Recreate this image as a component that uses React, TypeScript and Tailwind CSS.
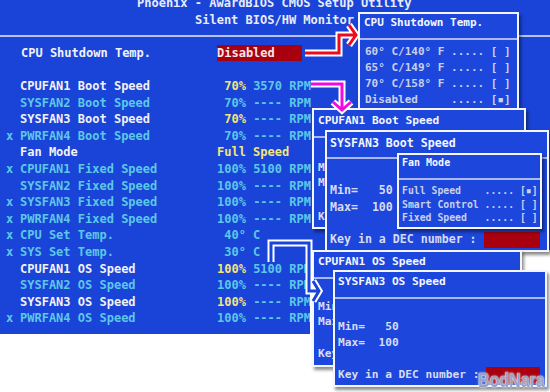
import type { ReactNode } from 'react'

type Row = { x?: boolean; name: string; hi?: boolean; pct: string; rest?: string }

const rows: Row[] = [
  { name: 'CPUFAN1 Boot Speed', hi: true, pct: ' 70%', rest: ' 3570 RPM' },
  { name: 'SYSFAN2 Boot Speed', pct: ' 70%', rest: ' ---- RPM' },
  { name: 'SYSFAN3 Boot Speed', hi: true, pct: ' 70%', rest: ' ---- RPM' },
  { x: true, name: 'PWRFAN4 Boot Speed', pct: ' 70%', rest: ' ---- RPM' },
  { name: 'Fan Mode', hi: true, pct: 'Full Speed' },
  { x: true, name: 'CPUFAN1 Fixed Speed', pct: '100%', rest: ' 5100 RPM' },
  { name: 'SYSFAN2 Fixed Speed', pct: '100%', rest: ' ---- RPM' },
  { x: true, name: 'SYSFAN3 Fixed Speed', pct: '100%', rest: ' ---- RPM' },
  { x: true, name: 'PWRFAN4 Fixed Speed', pct: '100%', rest: ' ---- RPM' },
  { x: true, name: 'CPU Set Temp.', pct: ' 40° C' },
  { x: true, name: 'SYS Set Temp.', pct: ' 30° C' },
  { name: 'CPUFAN1 OS Speed', hi: true, pct: '100%', rest: ' 5100 RPM' },
  { name: 'SYSFAN2 OS Speed', pct: '100%', rest: ' ---- RPM' },
  { name: 'SYSFAN3 OS Speed', hi: true, pct: '100%', rest: ' ---- RPM' },
  { x: true, name: 'PWRFAN4 OS Speed', pct: '100%', rest: ' ---- RPM' },
]

function Win({ className, children }: { className: string; children: ReactNode }) {
  return (
    <div
      className={
        'absolute flex flex-col overflow-hidden border-2 border-[#f4f6ff] bg-[#1d47dc] font-bold text-[#d6dcf4] shadow-[2px_3px_3px_rgba(0,0,0,0.45)] ' +
        className
      }
    >
      {children}
    </div>
  )
}

function Sep({ className }: { className: string }) {
  return <div className={'h-[2px] w-full shrink-0 bg-[#a9b8ee] ' + className} />
}

export default function App() {
  return (
    <div className="relative h-[392px] w-[550px] overflow-hidden bg-white font-['DejaVu_Sans_Mono',monospace]">
      {/* main setup screen */}
      <div className="flex h-[334px] w-[550px] flex-col bg-[#1a44d8] text-[12px] font-bold whitespace-pre [clip-path:polygon(0_0,100%_0,100%_250px,310px_250px,310px_100%,0_100%)]">
        <div className="-mt-[3px] h-[12px] pl-[137px] leading-[12px] text-[#e8ecf8]">
          Phoenix - AwardBIOS CMOS Setup Utility
        </div>
        <div className="mt-[5px] h-[12px] pl-[195px] leading-[12px] text-[#e8ecf8]">Silent BIOS/HW Monitor</div>
        <div className="mt-[9px] h-[2px] w-full bg-[#b8c4f0]" />
        <div className="mt-[8px] flex h-[16px] items-center leading-[16px]">
          <span className="w-[217px] pl-[21px] text-[#f0f2f8]">CPU Shutdown Temp.</span>
          <span className="h-[16px] w-[85px] bg-[#a8000e] text-[#f4e8e8]">Disabled</span>
        </div>
        <div className="mt-[17px] flex flex-col">
          {rows.map((r) => (
            <div key={r.name} className="flex h-[16.6px] leading-[16.6px] text-[#5cc8e8]">
              <span className="w-[20px] pl-[6px]">{r.x ? 'x' : ''}</span>
              <span className={'w-[197px] ' + (r.hi ? 'text-[#f2f2f4]' : '')}>{r.name}</span>
              <span className={r.hi ? 'text-[#f2e67c]' : ''}>{r.pct}</span>
              <span>{r.rest}</span>
            </div>
          ))}
        </div>
      </div>

      {/* CPU Shutdown Temp. */}
      <Win className="left-[358px] top-[12px] h-[110px] w-[161px] text-[11px]">
        <div className="mt-[2px] h-[14px] pl-[4px] leading-[14px] text-[#f4f6ff]">CPU Shutdown Temp.</div>
        <Sep className="mt-[8px]" />
        <div className="mt-[4px] flex flex-col whitespace-pre pl-[5px] text-[#c8d0ec]">
          <div className="h-[16px] leading-[16px]">60° C/140° F ..... [ ]</div>
          <div className="h-[16px] leading-[16px]">65° C/149° F ..... [ ]</div>
          <div className="h-[16px] leading-[16px]">70° C/158° F ..... [ ]</div>
          <div className="h-[16px] leading-[16px]">Disabled     ..... [▪]</div>
        </div>
      </Win>

      {/* CPUFAN1 Boot Speed */}
      <Win className="left-[312px] top-[108px] h-[121px] w-[214px] text-[11.2px]">
        <div className="mt-[4px] h-[14px] pl-[4px] leading-[14px] text-[#f4f6ff]">CPUFAN1 Boot Speed</div>
        <Sep className="mt-[8px]" />
        <div className="mt-[23px] h-[14px] whitespace-pre pl-[4px] leading-[14px]">Min=   50</div>
        <div className="mt-[1px] h-[14px] whitespace-pre pl-[4px] leading-[14px]">Max=  100</div>
        <div className="mt-[19px] flex h-[16px] items-center justify-between pl-[4px]">
          <span>Key in a DEC number :</span>
          <span className="mr-[6px] h-[16px] w-[54px] bg-[#a8000e]" />
        </div>
      </Win>

      {/* SYSFAN3 Boot Speed */}
      <Win className="left-[325px] top-[130px] h-[122px] w-[224px] text-[11.6px]">
        <div className="mt-[4px] h-[14px] pl-[3px] leading-[14px] text-[#f4f6ff]">SYSFAN3 Boot Speed</div>
        <Sep className="mt-[7px]" />
        <div className="mt-[24px] h-[14px] whitespace-pre pl-[3px] leading-[14px]">Min=   50</div>
        <div className="mt-[3px] h-[14px] whitespace-pre pl-[3px] leading-[14px]">Max=  100</div>
        <div className="mt-[18px] flex h-[16px] items-center justify-between pl-[3px]">
          <span>Key in a DEC number :</span>
          <span className="mr-[7px] h-[16px] w-[56px] bg-[#a8000e]" />
        </div>
      </Win>

      {/* Fan Mode */}
      <Win className="left-[397px] top-[153px] h-[76px] w-[145px] text-[9.8px]">
        <div className="mt-[2px] h-[12px] pl-[3px] text-[10px] leading-[12px] text-[#f4f6ff]">Fan Mode</div>
        <Sep className="mt-[9px]" />
        <div className="mt-[4px] flex flex-col whitespace-pre pl-[3px] text-[#c8d0ec]">
          <div className="h-[13.5px] leading-[13.5px]">Full Speed    ..... [▪]</div>
          <div className="h-[13.5px] leading-[13.5px]">Smart Control ..... [ ]</div>
          <div className="h-[13.5px] leading-[13.5px]">Fixed Speed   ..... [ ]</div>
        </div>
      </Win>

      {/* CPUFAN1 OS Speed */}
      <Win className="left-[312px] top-[250px] h-[117px] w-[210px] text-[11.2px]">
        <div className="mt-[3px] h-[14px] pl-[4px] leading-[14px] text-[#f4f6ff]">CPUFAN1 OS Speed</div>
        <Sep className="mt-[8px]" />
        <div className="mt-[21px] h-[14px] whitespace-pre pl-[4px] leading-[14px]">Min=   50</div>
        <div className="mt-[1px] h-[14px] whitespace-pre pl-[4px] leading-[14px]">Max=  100</div>
        <div className="mt-[17px] flex h-[16px] items-center justify-between pl-[4px]">
          <span>Key in a DEC number :</span>
          <span className="mr-[6px] h-[16px] w-[54px] bg-[#a8000e]" />
        </div>
      </Win>

      {/* SYSFAN3 OS Speed */}
      <Win className="left-[333px] top-[270px] h-[117px] w-[214px] text-[11.2px]">
        <div className="mt-[3px] h-[14px] pl-[3px] leading-[14px] text-[#f4f6ff]">SYSFAN3 OS Speed</div>
        <Sep className="mt-[8px]" />
        <div className="mt-[21px] h-[14px] whitespace-pre pl-[3px] leading-[14px]">Min=   50</div>
        <div className="mt-[2px] h-[14px] whitespace-pre pl-[3px] leading-[14px]">Max=  100</div>
        <div className="mt-[17px] flex h-[16px] items-center justify-between pl-[3px]">
          <span>Key in a DEC number :</span>
          <span className="mr-[5px] h-[16px] w-[54px] bg-[#a8000e]" />
        </div>
      </Win>

      {/* arrows */}
      <svg className="pointer-events-none absolute left-0 top-0" width="550" height="392" viewBox="0 0 550 392" fill="none">
        <g strokeLinejoin="miter" strokeLinecap="butt">
          <path d="M305 53H339V35H354M349 25L356 35L349 45" stroke="#ffffff" strokeWidth="7" />
          <path d="M305 53H339V35H354M349 25L356 35L349 45" stroke="#f0081c" strokeWidth="3" />
          <path d="M311 84H342V108M333 102L342 110L351 102" stroke="#ffffff" strokeWidth="7" />
          <path d="M311 84H342V108M333 102L342 110L351 102" stroke="#f40ae0" strokeWidth="3" />
          <path d="M271 262V243H309V291H318M313 281L319 291L313 301" stroke="#ffffff" strokeWidth="7" />
          <path d="M271 262V243H309V291H318M313 281L319 291L313 301" stroke="#1a44d8" strokeWidth="3" />
        </g>
      </svg>

      {/* watermark */}
      <div className="absolute left-[478px] top-[370px] origin-top scale-y-[1.3] font-['Liberation_Sans',sans-serif] text-[16px] leading-[16px] font-bold text-[#8a96bc]/90 [text-shadow:0_0_1px_#fff,0_0_2px_#fff]">
        BodNara
      </div>
    </div>
  )
}
